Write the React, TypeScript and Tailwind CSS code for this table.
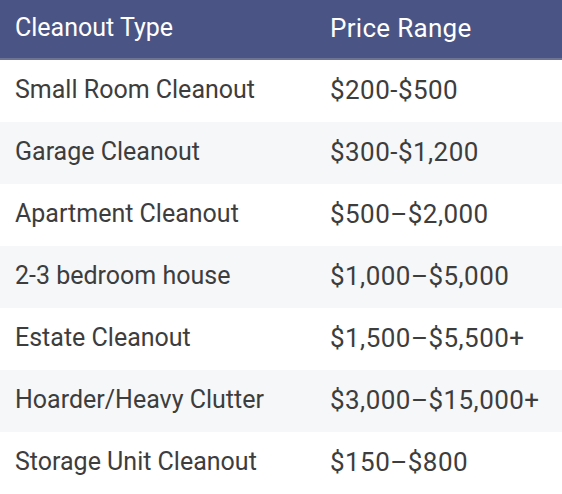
const rows: [string, string][] = [
  ['Small Room Cleanout', '$200-$500'],
  ['Garage Cleanout', '$300-$1,200'],
  ['Apartment Cleanout', '$500–$2,000'],
  ['2-3 bedroom house', '$1,000–$5,000'],
  ['Estate Cleanout', '$1,500–$5,500+'],
  ['Hoarder/Heavy Clutter', '$3,000–$15,000+'],
  ['Storage Unit Cleanout', '$150–$800'],
]

export default function App() {
  return (
    <div className="w-[562px] h-[494px] bg-white font-['Roboto',sans-serif] overflow-hidden">
      <div className="flex h-[60px] items-center pb-[2px] bg-[#4a5585] text-white border-b-2 border-[#6e7494]">
        <div className="w-[330px] pl-[15px] text-[25px]">Cleanout Type</div>
        <div className="text-[26px] tracking-[0.3px]">Price Range</div>
      </div>
      {rows.map(([type, price], i) => (
        <div
          key={type}
          className={`flex h-[62px] items-center pb-[2px] text-[#3d3d3d] ${i % 2 === 1 ? 'bg-[#f6f7f9]' : 'bg-white'}`}
        >
          <div className="w-[330px] pl-[15px] text-[25px]">{type}</div>
          <div className="text-[26px] tracking-[0.45px]">{price}</div>
        </div>
      ))}
    </div>
  )
}
